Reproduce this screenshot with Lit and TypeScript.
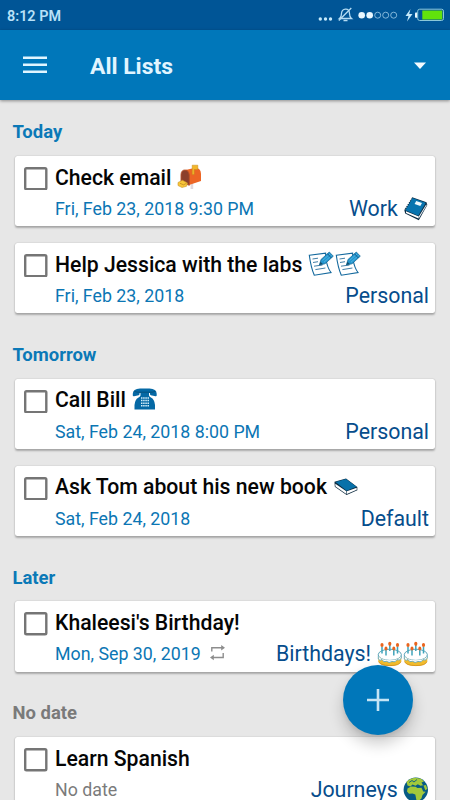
import { LitElement, html, css, svg, nothing, TemplateResult } from "lit";
import { customElement, property } from "lit/decorators.js";

type Glyph = "mailbox" | "notebook" | "memo" | "phone" | "book" | "cake" | "globe";

interface Task {
  title: string;
  icons?: Glyph[];
  date?: string;
  repeat?: boolean;
  list: string;
  listIcons?: Glyph[];
}

interface Section {
  name: string;
  muted?: boolean;
  tasks: Task[];
}

const SECTIONS: Section[] = [
  {
    name: "Today",
    tasks: [
      { title: "Check email", icons: ["mailbox"], date: "Fri, Feb 23, 2018 9:30 PM", list: "Work", listIcons: ["notebook"] },
      { title: "Help Jessica with the labs", icons: ["memo", "memo"], date: "Fri, Feb 23, 2018", list: "Personal" },
    ],
  },
  {
    name: "Tomorrow",
    tasks: [
      { title: "Call Bill", icons: ["phone"], date: "Sat, Feb 24, 2018 8:00 PM", list: "Personal" },
      { title: "Ask Tom about his new book", icons: ["book"], date: "Sat, Feb 24, 2018", list: "Default" },
    ],
  },
  {
    name: "Later",
    tasks: [
      { title: "Khaleesi's Birthday!", date: "Mon, Sep 30, 2019", repeat: true, list: "Birthdays!", listIcons: ["cake", "cake"] },
    ],
  },
  {
    name: "No date",
    muted: true,
    tasks: [{ title: "Learn Spanish", list: "Journeys", listIcons: ["globe"] }],
  },
];

const GLYPHS: Record<Glyph, TemplateResult> = {
  mailbox: svg`
    <rect x="13.600" y="18" width="2.600" height="7" fill="#e2d8dc"/>
    <path d="M8.500 6 18.500 3.800Q23.800 4.500 24 9.500V17L12 21Z" fill="#ec6524"/>
    <path d="M4 18V10.500Q4.300 6 8 6T12.300 11V21.300Z" fill="#8b3f2c" stroke="#b75028" stroke-width=".9"/>
    <path d="M15.200 10.500V1.200H20.800V5.500H17.200V10.500Z" fill="#f3b72b" stroke="#c58a1c" stroke-width=".5"/>
    <path d="M1 18.500 5.500 16.300 10.500 19 9.500 22.300 5 23.500 1 21.500Z" fill="#f8c63a" stroke="#c9952a" stroke-width=".6"/>
    <path d="m3 19.300 3.500 1.500 3-1.500" fill="none" stroke="#b98420" stroke-width=".7"/>`,
  notebook: svg`
    <path d="M9.200 1.300 23.500 6.300 24.300 9 15.800 24.200 2.200 17.600 1.300 13.800Z" fill="#0a2a42"/>
    <path d="m3 15.300 12.800 5.300-.3 1.800L3 16.900Z" fill="#fff"/>
    <path d="M23.300 8.200 15.800 20.600v2l7.700-13.200Z" fill="#f3f7fa"/>
    <path d="M9.500 2 22.800 6.800 15.300 19.800 2.400 14.200Z" fill="#0874af"/>
    <path d="m13.200 5 5.800 2-1.700 3-5.700-2.100Z" fill="#eef8fc"/>
    <path d="M8.200 2.800 1.700 13.700" stroke="#fff" stroke-width="1" stroke-dasharray="1.200 1.200"/>`,
  memo: svg`
    <path d="M1.300 4.300 17.600 2.200 18 8.500Q19.500 17 23 21.500L6.300 24.200Q3 17 1.300 4.300Z" fill="#fff" stroke="#12689d" stroke-width="1.100"/>
    <path d="m4.500 8 5.500-.8M5 11.500l5-.8M6 15.200l8.500-1.200M7.400 18.600l10-1.600" stroke="#427fa8" stroke-width="1"/>
    <path d="M11.400 14 13 8.500 21.300 1 25.300 5.200 17 12.800Z" fill="#2396cf" stroke="#13638f" stroke-width=".7"/>
    <path d="m14.500 9.500 7.700-6.700M16 11.200l7.700-6.900" stroke="#6fc8ec" stroke-width=".6"/>
    <path d="m19.600 2.900 3.700 4" stroke="#0d5688" stroke-width="1"/>
    <path d="m11.400 14 1-3.200 2.400 2.200Z" fill="#14506f"/>`,
  phone: svg`
    <path d="M.8 6.800Q1 1.800 8 1.500H17.500Q24.500 1.800 24.700 6.800V8.500Q24.600 9.500 23.500 9.300L18.800 8.300Q18 8.100 18 7V6H7.500V7Q7.500 8.100 6.700 8.300L2 9.300Q.9 9.500.8 8.500Z" fill="#0569a5"/>
    <path d="M8.500 5.500H17V8.500Q17.500 10 19.300 10.800 22.500 12.500 23 18V22.500H2.500V18Q3 12.500 6.200 10.800 8 10 8.500 8.500Z" fill="#0569a5"/>
    <path d="M2.200 4.200Q5 5.500 7.500 5.200H18Q21 5.500 23.500 4.200" fill="none" stroke="#07496f" stroke-width=".7"/>
    <path d="M9 11h8M9 13.600h8M9 16.200h8M9 18.800h8" stroke="#d6effa" stroke-width="1.500" stroke-dasharray="1.500 .660"/>`,
  book: svg`
    <path d="M1.500 7.800 13 4.500 24.300 13V16.200L13.600 21 1.800 12.800Z" fill="#0c293e"/>
    <path d="m2.300 9.800 11 7.400v2.900L2.500 12.500Z" fill="#fff"/>
    <path d="m13.900 17.300 9.800-3.500v2l-9.800 4.300Z" fill="#fff"/>
    <path d="M2.500 8.100 13 5 23.500 12.800 13.600 16.700Z" fill="#0871a9"/>`,
  cake: svg`
    <path d="M1.300 16V20Q2.500 25 12.800 25T24.300 20V16Z" fill="#f1bb2c"/>
    <path d="M1.500 20.500Q3 24.500 12.800 24.600T24 20.500" fill="none" stroke="#d18e19" stroke-width=".8"/>
    <ellipse cx="12.800" cy="13.800" rx="11.600" ry="5.600" fill="#fff" stroke="#4c9bb0" stroke-width=".9"/>
    <path d="M1.300 14.500V18Q3 20.500 5 18.500 6.500 22 9.500 20.300 12 22.500 15 20.500 18.500 22 20 18.700 23 20.300 24.300 17V14.500Q22.500 19.200 12.800 19.200T1.300 14.500Z" fill="#fff"/>
    <path d="M1.300 14.500V18Q3 20.500 5 18.500 6.500 22 9.500 20.300 12 22.500 15 20.500 18.500 22 20 18.700 23 20.300 24.300 17V14.500" fill="none" stroke="#4c9bb0" stroke-width=".8"/>
    <path d="M5 5.500v7M12.800 4V10M20.500 5.500v7M9 9v5.500M16.800 9v5.500" stroke="#3fa5bc" stroke-width="1.500"/>
    <g fill="#ea641d"><ellipse cx="5" cy="4" rx="1.600" ry="2.100"/><ellipse cx="12.800" cy="2.800" rx="1.600" ry="2.100"/><ellipse cx="20.500" cy="4" rx="1.600" ry="2.100"/><ellipse cx="9" cy="7.500" rx="1.500" ry="1.900"/><ellipse cx="16.800" cy="7.500" rx="1.500" ry="1.900"/></g>`,
  globe: svg`
    <circle cx="12.800" cy="12.800" r="12.200" fill="#075b84"/>
    <path d="M3.500 5Q7 1 12 .7L18 1.800 21 4.500 18.500 5.500 20 8.300 17.500 8.700 14.800 7.300 12.500 8.700 9.500 7.600 7.500 9.500 4.500 8.500Z" fill="#a3c93a"/>
    <path d="M4.500 11.500 8 9.500 12.500 9.800 14.500 11 18.500 10.800 20.200 14.500 22.700 14.700 19.500 18 18.400 21.500 15.500 24 13.500 23.500 12.300 17.500 9.500 16.500 6 16.800 4 14.500Z" fill="#a3c93a"/>
    <path d="M20.500 8.500 23 8l1.300 4-2 1.200Z" fill="#a3c93a"/>
    <path d="m6 5.500 3-2 2 1.500 3-2.500" fill="none" stroke="#075b84" stroke-width=".9"/>`,
};

@customElement("emoji-glyph")
class EmojiGlyph extends LitElement {
  @property() name: Glyph = "memo";

  static styles = css`
    :host { display: block; width: 26px; height: 26px; margin-right: 0.6px; flex: none; }
    svg { display: block; width: 26px; height: 26px; }
  `;

  render() {
    return html`<svg viewBox="0 0 26 26" fill="none">${GLYPHS[this.name]}</svg>`;
  }
}

@customElement("task-card")
class TaskCard extends LitElement {
  @property({ attribute: false }) task!: Task;

  static styles = css`
    :host {
      display: grid;
      grid-template-columns: 23px 1fr;
      grid-template-rows: 32px 26px;
      column-gap: 7px;
      box-sizing: border-box;
      height: 70.5px;
      padding: 6px 6px 0 10px;
      background: #fff;
      border-radius: 2.5px;
      box-shadow: 0 1.5px 2px rgba(0, 0, 0, 0.26), 0 0 1.5px rgba(0, 0, 0, 0.18);
    }
    .check {
      width: 23.500px;
      height: 23.500px;
      margin: 5px 0 0 -0.600px;
    }
    .title, .meta, .list, .date { display: flex; align-items: center; white-space: nowrap; }
    .title { height: 30.300px; font-weight: 500; font-size: 21.200px; color: #050505; }
    .icons { display: flex; margin-left: 5.700px; }
    .list .icons { margin-right: -1px; }
    .meta { grid-column: 2; height: 26px; margin-top: 1.600px; justify-content: space-between; }
    .date { font-size: 17.800px; color: #0b76b4; }
    .date.none { color: #7b7b7b; }
    .repeat { width: 17px; height: 17px; margin: -2px 0 0 8.500px; }
    .list { font-size: 21.350px; color: #064d8c; }
  `;

  render() {
    const t = this.task;
    const icons = (names?: Glyph[]) =>
      names ? html`<span class="icons">${names.map((n) => html`<emoji-glyph .name=${n}></emoji-glyph>`)}</span>` : nothing;
    return html`
      <svg class="check" viewBox="0 0 23.500 23.500" fill="none">
        <rect x="1.200" y="1.200" width="21.100" height="21.100" rx="1.300" stroke="#757575" stroke-width="2.400" />
      </svg>
      <div class="title"><span>${t.title}</span>${icons(t.icons)}</div>
      <div class="meta">
        <div class="date ${t.date ? "" : "none"}">
          <span>${t.date ?? "No date"}</span>
          ${t.repeat
            ? html`<svg class="repeat" viewBox="0 0 17 17" fill="none" stroke="#8d8d8d" stroke-width="1.400">
                <path d="M2.800 7.500V3.700H14M14.200 9v4.500H3" />
                <path d="m12.200 1 3.800 2.700-3.800 2.700ZM4.800 10.800 1 13.500l3.800 2.700Z" fill="#8d8d8d" stroke="none" />
              </svg>`
            : nothing}
        </div>
        <div class="list"><span>${t.list}</span>${icons(t.listIcons)}</div>
      </div>
    `;
  }
}

@customElement("app-root")
class AppRoot extends LitElement {
  static styles = css`
    :host {
      display: flex;
      flex-direction: column;
      position: relative;
      width: 450px;
      height: 800px;
      overflow: hidden;
      background: #e7e7e7;
      font-family: Roboto, "Liberation Sans", sans-serif;
    }
    .status {
      display: flex;
      align-items: center;
      justify-content: space-between;
      flex: none;
      box-sizing: border-box;
      height: 30px;
      padding: 0 5px 0 7px;
      background: #005596;
      color: #b9e1f8;
      font-size: 14.400px;
      font-weight: 600;
    }
    .clock { padding-top: 2px; }
    .indicators { width: 130px; height: 30px; }
    .bar {
      display: flex;
      align-items: center;
      flex: none;
      box-sizing: border-box;
      height: 70px;
      padding: 1px 23px 0;
      background: #0077ba;
      box-shadow: 0 1px 3px rgba(0, 0, 0, 0.4);
      color: #e1f5ff;
      z-index: 1;
    }
    .menu { width: 24px; height: 18px; margin-right: 43px; margin-top: -2px; }
    .heading { flex: 1; padding-top: 2px; font-size: 22.900px; font-weight: 700; }
    .caret { width: 14px; height: 8px; }
    .content { padding: 7.300px 15px 0; flex: 1; min-height: 0; }
    .section {
      display: flex;
      align-items: center;
      box-sizing: border-box;
      height: 48.700px;
      margin-left: -2.500px;
      padding-top: 1px;
      font-size: 18.450px;
      font-weight: 700;
      color: #0b79b7;
    }
    .section.muted { color: #7a7a7a; }
    task-card { margin-bottom: 16.500px; }
    .fab {
      position: absolute;
      right: 37.500px;
      bottom: 65px;
      display: grid;
      place-items: center;
      width: 70px;
      height: 70px;
      border-radius: 50%;
      background: #0077ba;
      box-shadow: 0 9px 15px rgba(0, 0, 0, 0.2), 0 2px 5px rgba(0, 0, 0, 0.08);
    }
    .plus { width: 22px; height: 22px; }
  `;

  render() {
    return html`
      <div class="status">
        <span class="clock">8:12 PM</span>
        <svg class="indicators" viewBox="315 0 130 30" fill="none">
          <g fill="#c5e9fa"><circle cx="320.300" cy="19" r="1.700" /><circle cx="325.500" cy="19" r="1.700" /><circle cx="330.500" cy="19" r="1.700" /></g>
          <g stroke="#b4dcf3" stroke-width="1.300">
            <path d="M339.500 18.500Q341.500 17 341.500 13.500 341.700 9.500 345.500 9.200T349.500 13.500Q349.500 17 351.500 18.500Z" />
            <path d="m338.800 20.500 12.500-12.500M343.500 20.500h4" />
          </g>
          <circle cx="361.700" cy="15.200" r="3.300" fill="#e8f7ff" /><circle cx="369.700" cy="15.200" r="3.300" fill="#e8f7ff" />
          <g stroke="#8fc0e0" stroke-width=".9"><circle cx="377.700" cy="15.200" r="3" /><circle cx="385.700" cy="15.200" r="3" /><circle cx="393.700" cy="15.200" r="3" /></g>
          <path d="m410.500 9-5 7h3l-1.500 5.500 5.500-7.500h-3.300Z" fill="#c5e9fa" />
          <path d="M417.200 12.500h-1.400q-.8 0-.8.800v3.700q0 .8.800.8h1.400Z" fill="#e8f7ff" />
          <rect x="417.700" y="9.200" width="25.800" height="11.300" rx="2" stroke="#8cc8d9" stroke-width="1" />
          <path d="M422.300 10.500h20v9h-20Z" fill="#61e30c" />
        </svg>
      </div>
      <div class="bar">
        <svg class="menu" viewBox="0 0 24 18" stroke="#e1f5ff" stroke-width="2.500"><path d="M0 1.800h24M0 8.800h24M0 15.800h24" /></svg>
        <div class="heading">All Lists</div>
        <svg class="caret" viewBox="0 0 14 8"><path d="M1 .5h12L7 7Z" fill="#f4fbff" /></svg>
      </div>
      <div class="content">
        ${SECTIONS.map(
          (s) => html`
            <div class="section ${s.muted ? "muted" : ""}">${s.name}</div>
            ${s.tasks.map((t) => html`<task-card .task=${t}></task-card>`)}
          `
        )}
      </div>
      <div class="fab">
        <svg class="plus" viewBox="0 0 22 22" stroke="#c5e5f5" stroke-width="2.600"><path d="M11 0v22M0 11h22" /></svg>
      </div>
    `;
  }
}
